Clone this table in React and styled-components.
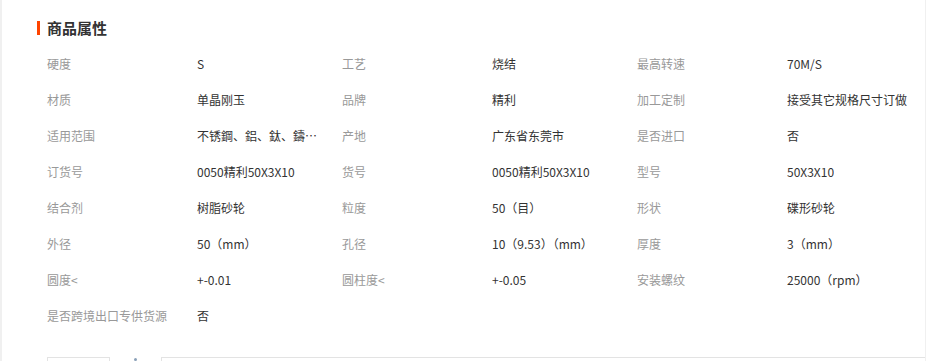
import React from "react";
import styled, { createGlobalStyle } from "styled-components";

const GlobalStyle = createGlobalStyle`
  html, body {
    margin: 0;
    padding: 0;
    background: #fff;
  }
  body {
    font-family: "Microsoft YaHei", "Noto Sans CJK SC", "Liberation Sans", sans-serif;
    overflow: hidden;
  }
`;

const Panel = styled.div`
  box-sizing: border-box;
  width: 926px;
  height: 361px;
  overflow: hidden;
  border-left: 2px solid #f0f0f0;
  border-right: 1px solid #f0f0f0;
  padding: 18px 0 0 35px;
`;

const Heading = styled.h3`
  display: flex;
  align-items: center;
  gap: 7px;
  margin: 0;
  height: 20px;
  font-size: 15px;
  font-weight: bold;
  color: #333;
  line-height: 20px;

  &::before {
    content: "";
    display: block;
    width: 3px;
    height: 14px;
    background: #ff4400;
  }
`;

const Attrs = styled.dl`
  display: grid;
  grid-template-columns: repeat(3, 150px 145px);
  grid-auto-rows: 36px;
  margin: 7px 0 0 10px;
  font-size: 12px;
`;

const Label = styled.dt`
  display: flex;
  align-items: center;
  margin: 0;
  color: #999;
  white-space: nowrap;
`;

const Value = styled.dd`
  display: flex;
  align-items: center;
  margin: 0;
  color: #333;
  min-width: 0;
  overflow: hidden;

  span {
    max-width: 122px;
    overflow: hidden;
    white-space: nowrap;
    text-overflow: ellipsis;
  }
`;

const Bottom = styled.div`
  display: flex;
  align-items: flex-start;
  margin: 24px 0 0 10px;
`;

const TabBox = styled.div`
  box-sizing: border-box;
  width: ${(p) => p.$width};
  flex: ${(p) => (p.$grow ? 1 : "none")};
  height: 40px;
  border: 1px solid #e3e3e3;
  border-right: ${(p) => (p.$grow ? "none" : "1px solid #e3e3e3")};
`;

const Mark = styled.div`
  width: 51px;
  display: flex;
  justify-content: center;
  padding-top: 1px;

  &::before {
    content: "";
    width: 3px;
    height: 3px;
    border-radius: 50%;
    background: #8aa0b8;
  }
`;

const attrs = [
  ["硬度", "S"],
  ["工艺", "烧结"],
  ["最高转速", "70M/S"],
  ["材质", "单晶刚玉"],
  ["品牌", "精利"],
  ["加工定制", "接受其它规格尺寸订做"],
  ["适用范围", "不锈鋼、鋁、鈦、鑄鐵、銅等"],
  ["产地", "广东省东莞市"],
  ["是否进口", "否"],
  ["订货号", "0050精利50X3X10"],
  ["货号", "0050精利50X3X10"],
  ["型号", "50X3X10"],
  ["结合剂", "树脂砂轮"],
  ["粒度", "50（目）"],
  ["形状", "碟形砂轮"],
  ["外径", "50（mm）"],
  ["孔径", "10（9.53）（mm）"],
  ["厚度", "3（mm）"],
  ["圆度<", "+-0.01"],
  ["圆柱度<", "+-0.05"],
  ["安装螺纹", "25000（rpm）"],
  ["是否跨境出口专供货源", "否"],
];

export default function App() {
  return (
    <>
      <GlobalStyle />
      <Panel>
        <Heading>商品属性</Heading>
        <Attrs>
          {attrs.map(([k, v]) => (
            <React.Fragment key={k}>
              <Label>{k}</Label>
              <Value>
                <span>{v}</span>
              </Value>
            </React.Fragment>
          ))}
        </Attrs>
        <Bottom>
          <TabBox $width="63px" />
          <Mark />
          <TabBox $grow />
        </Bottom>
      </Panel>
    </>
  );
}
